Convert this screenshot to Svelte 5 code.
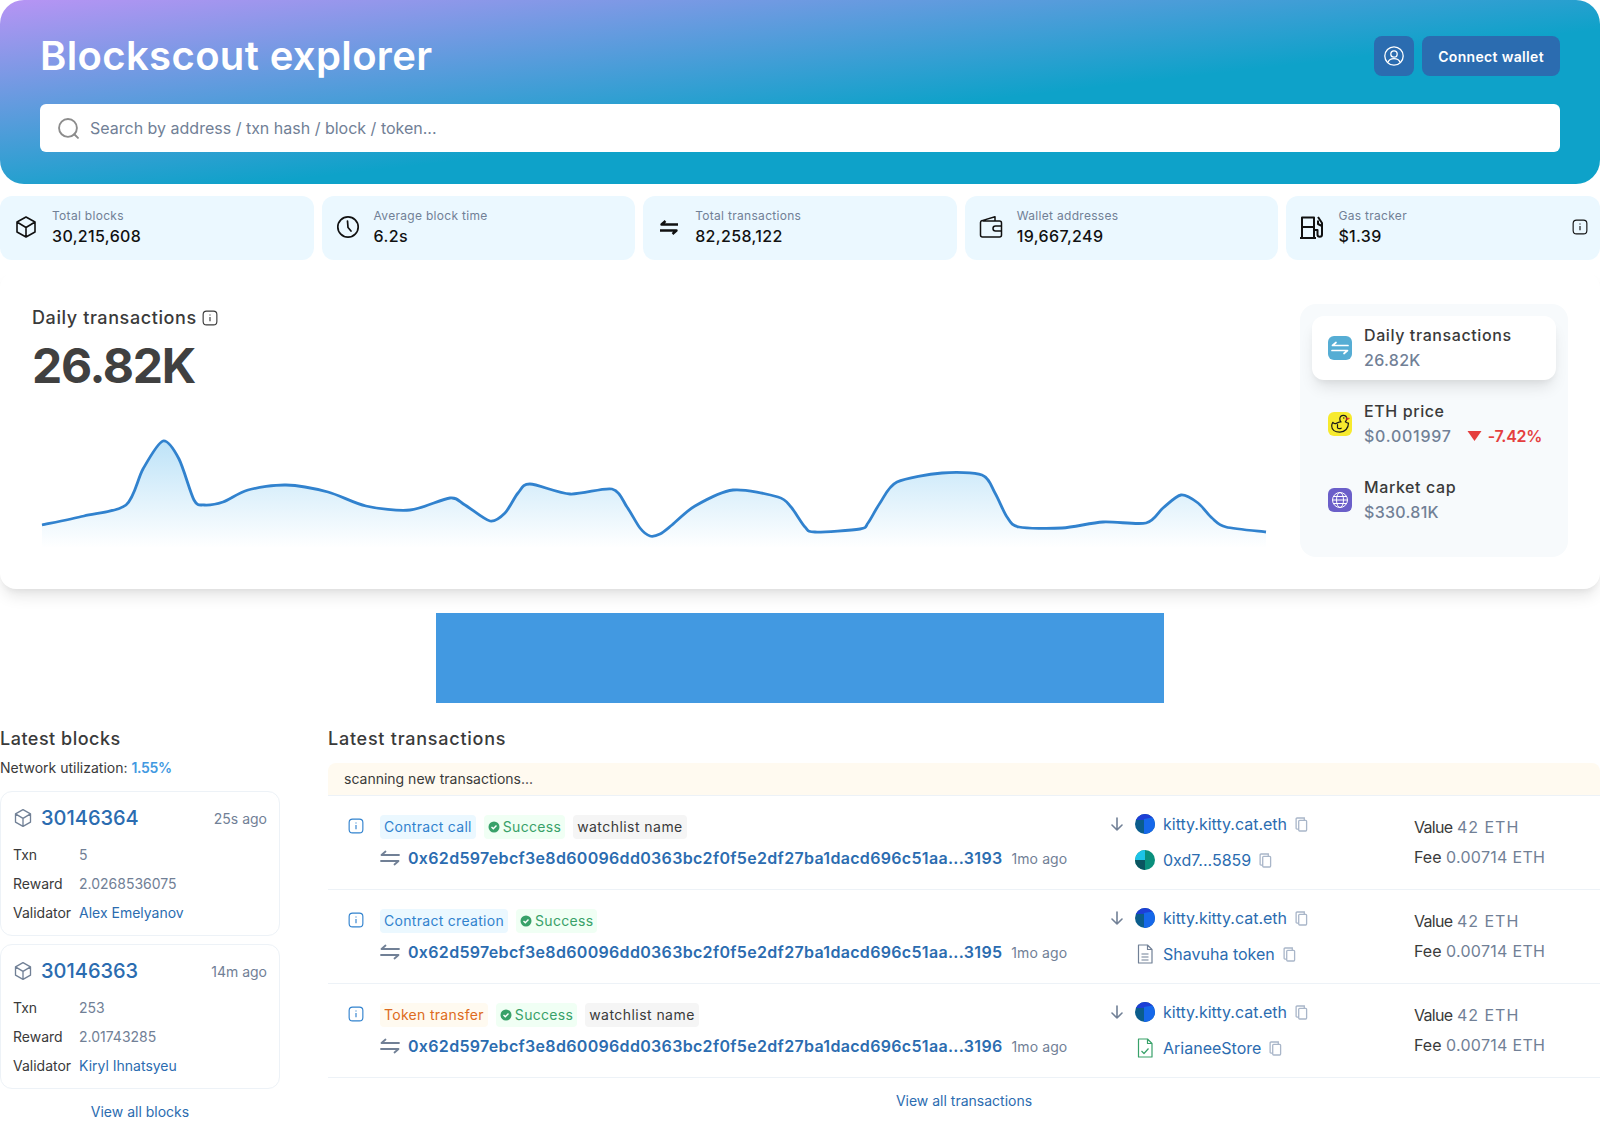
<script lang="ts">
	const stats = [
		{ icon: 'cube', label: 'Total blocks', value: '30,215,608' },
		{ icon: 'clock', label: 'Average block time', value: '6.2s' },
		{ icon: 'swap', label: 'Total transactions', value: '82,258,122' },
		{ icon: 'wallet', label: 'Wallet addresses', value: '19,667,249' },
		{ icon: 'gas', label: 'Gas tracker', value: '$1.39', info: true }
	];

	const points = [
		[42, 525], [84, 516], [126, 505], [143, 469], [163, 441], [179, 459], [194, 500], [204, 505],
		[223, 502], [248, 490], [286, 485], [328, 492], [366, 506], [410, 510], [450, 498], [465, 505], [490, 521],
		[505, 513], [518, 493], [530, 484], [570, 494], [612, 489], [627, 507], [640, 528], [650, 536], [660, 534],
		[672, 525], [695, 506], [733, 490], [778, 497], [791, 507], [805, 527], [815, 532], [860, 529], [868, 523],
		[880, 503], [897, 482], [942, 473], [982, 475], [995, 493], [1007, 517], [1019, 527], [1062, 528],
		[1103, 522], [1146, 523], [1163, 508], [1181, 495], [1198, 503], [1212, 518], [1226, 527], [1266, 532]
	];

	function smooth(pts: number[][]) {
		let d = `M${pts[0][0]} ${pts[0][1]}`;
		for (let i = 0; i < pts.length - 1; i++) {
			const p0 = pts[i - 1] ?? pts[i];
			const p1 = pts[i];
			const p2 = pts[i + 1];
			const p3 = pts[i + 2] ?? p2;
			const c1x = p1[0] + (p2[0] - p0[0]) / 7;
			const c1y = p1[1] + (p2[1] - p0[1]) / 7;
			const c2x = p2[0] - (p3[0] - p1[0]) / 7;
			const c2y = p2[1] - (p3[1] - p1[1]) / 7;
			d += ` C${c1x} ${c1y} ${c2x} ${c2y} ${p2[0]} ${p2[1]}`;
		}
		return d;
	}
	const line = smooth(points);
	const area = `${line} L1266 548 L42 548 Z`;

	const blocks = [
		{ num: '30146364', time: '25s ago', txn: '5', reward: '2.0268536075', validator: 'Alex Emelyanov' },
		{ num: '30146363', time: '14m ago', txn: '253', reward: '2.01743285', validator: 'Kiryl Ihnatsyeu' }
	];

	const txs = [
		{ kind: 'Contract call', cls: 'tag-blue', watch: true, end: '3193', to: '0xd7...5859', toIcon: 'pie' },
		{ kind: 'Contract creation', cls: 'tag-blue', watch: false, end: '3195', to: 'Shavuha token', toIcon: 'doc' },
		{ kind: 'Token transfer', cls: 'tag-orange', watch: true, end: '3196', to: 'ArianeeStore', toIcon: 'check' }
	];
</script>

{#snippet info(cls)}
	<svg class={cls} viewBox="0 0 14 14" fill="none" stroke="currentColor"><rect x="1" y="1" width="12" height="12" rx="3"/><path d="M7 6.2v3.6M7 4v.9"/></svg>
{/snippet}

{#snippet swap(cls)}
	<svg class={cls} viewBox="0 0 20 16" fill="none" stroke="currentColor" stroke-width="1.8" stroke-linecap="round" stroke-linejoin="round"><path d="M19 5H1.5L5.5 1.500M1 11h17.500l-4 3.500"/></svg>
{/snippet}

{#snippet cube(cls)}
	<svg class={cls} viewBox="0 0 24 24" fill="none" stroke="currentColor" stroke-width="1.6" stroke-linejoin="round"><path d="M12 2l9 5v10l-9 5-9-5V7zM3 7l9 5.500L21 7M12 12.500V22"/></svg>
{/snippet}

{#snippet copy()}
	<svg class="copy" viewBox="0 0 14 16" fill="none" stroke="#a9b6c9" stroke-width="1.4"><rect x="4" y="3.500" width="8.500" height="11.500" rx="1"/><path d="M4 13H2.200a1 1 0 0 1-1-1V2a1 1 0 0 1 1-1H10v2.500"/></svg>
{/snippet}

{#snippet kitty()}
	<svg class="avatar" viewBox="0 0 20 20"><clipPath id="av"><circle cx="10" cy="10" r="10"/></clipPath><g clip-path="url(#av)"><rect width="20" height="20" fill="#0b5d8c"/><rect width="20" height="6" fill="#1d3fd6"/><path d="M9 5l11-2v17H9z" fill="#1668ea"/></g></svg>
{/snippet}

{#snippet pie()}
	<svg class="avatar" viewBox="0 0 20 20"><clipPath id="pv"><circle cx="10" cy="10" r="10"/></clipPath><g clip-path="url(#pv)"><rect width="20" height="20" fill="#0a8f7c"/><rect width="10" height="10" fill="#1cc3e8"/><rect y="10" width="10" height="10" fill="#0b5560"/></g></svg>
{/snippet}

<div class="page">
	<header class="hero">
		<div class="hero-top">
			<h1>Blockscout explorer</h1>
			<div class="actions">
				<button class="btn btn-icon" aria-label="Profile">
					<svg viewBox="0 0 20 20" fill="none" stroke="#fff" stroke-width="1.300"><circle cx="10" cy="10" r="9.200"/><circle cx="10" cy="8" r="3.200"/><path d="M4 16.200c1-2.600 3.200-3.600 6-3.600s5 1 6 3.600"/></svg>
				</button>
				<button class="btn">Connect wallet</button>
			</div>
		</div>
		<div class="search">
			<svg viewBox="0 0 20 20" fill="none" stroke="#8c8c8c" stroke-width="1.800" stroke-linecap="round"><circle cx="9.500" cy="9.500" r="8.500"/><path d="M15.500 15.500L19 19"/></svg>
			<span>Search by address / txn hash / block / token...</span>
		</div>
	</header>

	<section class="stats">
		{#each stats as s}
			<div class="stat">
				{#if s.icon === 'cube'}
					{@render cube('stat-icon')}
				{:else if s.icon === 'clock'}
					<svg class="stat-icon" viewBox="0 0 24 24" fill="none" stroke="currentColor" stroke-width="1.700" stroke-linecap="round"><circle cx="12" cy="12" r="10.200"/><path d="M11.500 6l.5 6.500 3 3.500"/></svg>
				{:else if s.icon === 'swap'}
					<svg class="stat-icon" viewBox="0 0 24 24" fill="none" stroke="currentColor" stroke-width="2.400" stroke-linejoin="round"><path d="M21 9.500H4.500L8.500 6M3 15.500h16.500l-4 3.500"/></svg>
				{:else if s.icon === 'wallet'}
					<svg class="stat-icon" viewBox="0 0 24 24" fill="none" stroke="currentColor" stroke-width="1.500" stroke-linejoin="round"><path d="M1.500 7.500A2 2 0 0 1 3 5.600L16 1.800v4M3.500 6h17a2 2 0 0 1 2 2v12a2 2 0 0 1-2 2h-17a2 2 0 0 1-2-2V7.500"/><path d="M22.500 11h-6a2.500 2.500 0 0 0 0 5h6"/></svg>
				{:else}
					<svg class="stat-icon" viewBox="0 0 24 24" fill="none" stroke="currentColor" stroke-width="2" stroke-linejoin="round"><path d="M2 23V2.500h12V23M2 12h12M0 23h16M14 15h3.500v4.500a2 2 0 0 0 4.500 0V8l-4-6"/><path d="M18 5.500v3.500l4 2"/></svg>
				{/if}
				<div class="stat-text">
					<div class="stat-label">{s.label}</div>
					<div class="stat-value">{s.value}</div>
				</div>
				{#if s.info}
					{@render info('stat-info')}
				{/if}
			</div>
		{/each}
	</section>

	<section class="chart-card">
		<div class="chart-main">
			<div class="chart-title">Daily transactions {@render info('title-info')}</div>
			<div class="chart-value">26.82K</div>
			<svg class="chart" viewBox="32 390 1248 167">
				<defs>
					<linearGradient id="fill" gradientUnits="userSpaceOnUse" x1="0" y1="442" x2="0" y2="548">
						<stop offset="0" stop-color="#bee3f8"/>
						<stop offset="1" stop-color="#fff"/>
					</linearGradient>
				</defs>
				<path d={area} fill="url(#fill)"/>
				<path d={line} fill="none" stroke="#3182ce" stroke-width="2.800"/>
			</svg>
		</div>
		<aside class="chart-panel">
			<div class="metric metric-active">
				<div class="metric-icon icon-blue">
					<svg viewBox="0 0 24 24" fill="none" stroke="#fff" stroke-width="1.700" stroke-linecap="round" stroke-linejoin="round"><path d="M20 9.500H4.500L8 6.500M4 14.500h15.500l-3.500 3"/></svg>
				</div>
				<div>
					<div class="metric-label">Daily transactions</div>
					<div class="metric-value">26.82K</div>
				</div>
			</div>
			<div class="metric">
				<div class="metric-icon icon-yellow">
					<svg viewBox="0 0 24 24" fill="none" stroke="#1a1a1a" stroke-width="1.200" stroke-linejoin="round" stroke-linecap="round"><path d="M13 10c-.9-1-1.300-2.200-1.200-3.300.2-2 1.800-3.300 3.500-3.300 2 0 3.400 1.400 3.400 3.300 0 1.300-.7 2.300-1.400 3.100 1.500 1.100 2.600 1.500 3.200 1.300 0 5-3.500 9-8.600 9-4.800 0-8.200-2.300-8.200-6.200 0-1.100.3-2.400 1.100-3.600.8 1.400 2.200 1.600 3.500 1.100 1.500-.6 2.800-1.700 4.700-1.400z"/><path d="M9.500 12.500v3.300c1 1.100 2.500 1 3.700.4"/><path d="M18.600 5.800l2.900.6-2.800 1.500z" fill="#d4342a" stroke="#d4342a" stroke-width=".6"/><circle cx="15.800" cy="6" r=".7" fill="#1a1a1a" stroke="none"/></svg>
				</div>
				<div>
					<div class="metric-label">ETH price</div>
					<div class="metric-value">
						<span class="price">$0.001997</span>
						<span class="delta"><svg viewBox="0 0 14 10"><path d="M0 0h14L7 10z" fill="#e53e3e"/></svg>-7.42%</span>
					</div>
				</div>
			</div>
			<div class="metric">
				<div class="metric-icon icon-purple">
					<svg viewBox="0 0 24 24" fill="none" stroke="#fff" stroke-width="1"><circle cx="12" cy="12" r="7.500"/><ellipse cx="12" cy="12" rx="3.500" ry="7.500"/><path d="M4.500 12h15M5.500 8.500h13M5.500 15.500h13"/></svg>
				</div>
				<div>
					<div class="metric-label">Market cap</div>
					<div class="metric-value">$330.81K</div>
				</div>
			</div>
		</aside>
	</section>

	<div class="ad"></div>

	<section class="latest">
		<div class="blocks">
			<h2>Latest blocks</h2>
			<div class="utilization">Network utilization: <b>1.55%</b></div>
			<div class="block-list">
				{#each blocks as b}
					<div class="block">
						<div class="block-head">
							{@render cube('block-icon')}
							<a href="#top" class="block-num">{b.num}</a>
							<span class="block-time">{b.time}</span>
						</div>
						<div class="block-grid">
							<span>Txn</span><span class="muted">{b.txn}</span>
							<span>Reward</span><span class="muted">{b.reward}</span>
							<span>Validator</span><a href="#top">{b.validator}</a>
						</div>
					</div>
				{/each}
			</div>
			<a href="#top" class="view-all view-blocks">View all blocks</a>
		</div>

		<div class="txs">
			<h2 class="txs-title">Latest transactions</h2>
			<div class="scanning">scanning new transactions...</div>
			{#each txs as t}
				<div class="tx">
					<div class="tx-info">{@render info('tx-info-icon')}</div>
					<div class="tx-main">
						<div class="tags">
							<span class="tag {t.cls}">{t.kind}</span>
							<span class="tag tag-green">
								<svg viewBox="0 0 12 12"><circle cx="6" cy="6" r="5.500" fill="#38a169"/><path d="M3.500 6l1.800 1.800L8.500 4.500" fill="none" stroke="#fff" stroke-width="1.400"/></svg>
								Success
							</span>
							{#if t.watch}
								<span class="tag tag-gray">watchlist name</span>
							{/if}
						</div>
						<div class="hash-row">
							{@render swap('tx-swap')}
							<a href="#top" class="hash">0x62d597ebcf3e8d60096dd0363bc2f0f5e2df27ba1dacd696c51aa...{t.end}</a>
							<span class="tx-time">1mo ago</span>
						</div>
					</div>
					<div class="tx-addr">
						<div class="addr-row first">
							<svg class="arrow" viewBox="0 0 12 14" fill="none" stroke="#718096" stroke-width="1.600" stroke-linecap="round" stroke-linejoin="round"><path d="M6 1v12M1 8l5 5 5-5"/></svg>
							{@render kitty()}
							<a href="#top">kitty.kitty.cat.eth</a>
							{@render copy()}
						</div>
						<div class="addr-row second">
							{#if t.toIcon === 'pie'}
								{@render pie()}
							{:else}
								<svg class="avatar" viewBox="0 0 20 20" fill="none" stroke={t.toIcon === 'doc' ? '#718096' : '#38a169'} stroke-width="1.200" stroke-linejoin="round"><path d="M3.500 1h9l4.500 4.500V19H3.500zM12.500 1v4.500H17"/>{#if t.toIcon === 'doc'}<path d="M6.500 10h7M6.500 13h7M6.500 16h7"/>{:else}<path d="M6.500 13l2.500 2.500 4.500-5"/>{/if}</svg>
							{/if}
							<a href="#top">{t.to}</a>
							{@render copy()}
						</div>
					</div>
					<div class="tx-value">
						<div class="row-value"><span class="lbl">Value</span> <span class="muted">42 ETH</span></div>
						<div class="row-fee"><span>Fee</span> <span class="muted">0.00714 ETH</span></div>
					</div>
				</div>
			{/each}
			<a href="#top" class="view-all view-txs">View all transactions</a>
		</div>
	</section>
</div>

<style>
	:global(body) {
		margin: 0;
		background: #fff;
	}
	.page {
		font-family: Inter, "Liberation Sans", sans-serif;
		font-size: 14px;
		color: #3a3a3a;
		height: 1122px;
		overflow: hidden;
	}
	a {
		color: #2b6cb0;
		text-decoration: none;
	}
	svg {
		display: block;
		flex-shrink: 0;
	}
	.muted {
		color: #718096;
	}

	.hero {
		height: 184px;
		box-sizing: border-box;
		padding: 36px 40px 32px;
		border-radius: 24px;
		background: linear-gradient(to bottom right, #b794f4 0%, #0ea2c9 58%);
	}
	.hero-top {
		display: flex;
		justify-content: space-between;
		align-items: center;
		height: 40px;
		margin-bottom: 28px;
	}
	h1 {
		margin: 0;
		font-size: 40px;
		font-weight: 600;
		color: #fff;
		line-height: 40px;
		letter-spacing: 0.37px;
	}
	.actions {
		display: flex;
		gap: 8px;
	}
	.btn {
		height: 40px;
		padding: 0 16px;
		border: 0;
		border-radius: 8px;
		background: #2b6cb0;
		color: #fff;
		font: 600 14px Inter, sans-serif;
		letter-spacing: 0.33px;
	}
	.btn-icon {
		width: 40px;
		padding: 10px;
	}
	.search {
		height: 48px;
		display: flex;
		align-items: center;
		gap: 11px;
		padding-left: 18px;
		background: #fff;
		border-radius: 6px;
		font-size: 16px;
		color: #718096;
	}
	.search svg {
		width: 21px;
		height: 21px;
	}

	.stats {
		display: grid;
		grid-template-columns: repeat(5, 1fr);
		gap: 8px;
		margin-top: 12px;
	}
	.stat {
		height: 64px;
		display: flex;
		align-items: center;
		gap: 14px;
		padding: 0 12px 0 14px;
		background: #ebf8ff;
		border-radius: 12px;
		color: #111;
	}
	.stat-icon {
		width: 24px;
		height: 24px;
		margin-top: -2px;
	}
	.stat-text {
		flex: 1;
	}
	.stat-label {
		font-size: 12px;
		line-height: 16px;
		color: #718096;
		letter-spacing: 0.3px;
	}
	.stat-value {
		font-size: 16px;
		font-weight: 500;
		line-height: 24px;
		letter-spacing: 0.35px;
	}
	.stat-info {
		width: 16px;
		height: 16px;
		margin: -2px 0 0 0;
	}

	.chart-card {
		display: flex;
		gap: 20px;
		margin-top: 12px;
		padding: 32px;
		border-radius: 16px;
		background: #fff;
		box-shadow: 0 10px 15px -3px rgba(0, 0, 0, 0.1), 0 4px 6px -2px rgba(0, 0, 0, 0.05);
	}
	.chart-main {
		flex: 1;
		min-width: 0;
	}
	.chart-title {
		display: flex;
		align-items: center;
		gap: 5px;
		margin-top: 2px;
		font-size: 18px;
		font-weight: 500;
		line-height: 24px;
		letter-spacing: 0.6px;
	}
	.title-info {
		width: 16px;
		height: 16px;
	}
	.chart-value {
		margin-top: 12px;
		font-size: 48px;
		font-weight: 700;
		line-height: 48px;
		letter-spacing: -1.3px;
		color: #404040;
	}
	.chart {
		width: 1248px;
		height: 167px;
	}
	.chart-panel {
		width: 268px;
		box-sizing: border-box;
		padding: 12px;
		display: flex;
		flex-direction: column;
		gap: 12px;
		background: #f7fafc;
		border-radius: 16px;
	}
	.metric {
		height: 64px;
		display: flex;
		align-items: center;
		gap: 12px;
		padding-left: 16px;
		border-radius: 12px;
	}
	.metric-active {
		background: #fff;
		box-shadow: 0 10px 15px -3px rgba(0, 0, 0, 0.1), 0 4px 6px -2px rgba(0, 0, 0, 0.05);
	}
	.metric-icon {
		width: 24px;
		height: 24px;
		border-radius: 6px;
	}
	.icon-blue {
		background: #56add4;
	}
	.icon-yellow {
		background: #f7ea2e;
	}
	.icon-purple {
		background: #6b5fc9;
	}
	.metric-label {
		margin: -1px 0 1px;
		font-size: 16px;
		font-weight: 500;
		line-height: 24px;
		letter-spacing: 0.6px;
	}
	.metric-value {
		display: flex;
		align-items: center;
		gap: 15px;
		font-size: 16px;
		font-weight: 500;
		line-height: 24px;
		color: #718096;
		letter-spacing: 0.3px;
	}
	.price {
		letter-spacing: 0.75px;
	}
	.delta {
		display: flex;
		align-items: center;
		gap: 6px;
		color: #e53e3e;
		font-weight: 600;
		letter-spacing: -0.3px;
	}
	.delta svg {
		width: 15px;
		height: 10px;
	}

	.ad {
		width: 728px;
		height: 90px;
		margin: 24px auto 0;
		background: #4299e1;
	}

	.latest {
		display: flex;
		gap: 48px;
		margin-top: 24px;
	}
	h2 {
		margin: 0;
		font-size: 18px;
		font-weight: 500;
		line-height: 24px;
		letter-spacing: 0.5px;
	}
	.txs-title {
		letter-spacing: 0.75px;
	}
	.blocks {
		width: 280px;
		flex-shrink: 0;
	}
	.utilization {
		margin-top: 7px;
		line-height: 20px;
	}
	.utilization b {
		color: #4299e1;
		font-weight: 600;
		letter-spacing: -0.3px;
	}
	.block-list {
		display: flex;
		flex-direction: column;
		gap: 8px;
		margin-top: 13px;
	}
	.block {
		height: 145px;
		box-sizing: border-box;
		padding: 12px;
		border: 1px solid #edf2f7;
		border-radius: 12px;
	}
	.block-head {
		display: flex;
		align-items: center;
		gap: 8px;
		height: 28px;
		margin-bottom: 13px;
	}
	.block-icon {
		width: 20px;
		height: 20px;
		color: #718096;
	}
	.block-num {
		flex: 1;
		font-size: 20px;
		font-weight: 500;
	}
	.block-time {
		color: #718096;
	}
	.block-grid {
		display: grid;
		grid-template-columns: 66px 1fr;
		row-gap: 9px;
		line-height: 20px;
	}
	.view-all {
		display: block;
		text-align: center;
		line-height: 20px;
	}
	.view-blocks {
		margin-top: 13px;
	}
	.view-txs {
		margin-top: 13px;
	}

	.txs {
		flex: 1;
		min-width: 0;
	}
	.scanning {
		margin-top: 12px;
		box-sizing: border-box;
		padding-left: 16px;
		line-height: 32px;
		background: #fffaf0;
		border-radius: 8px 8px 0 0;
		border-bottom: 1px solid #edf2f7;
		height: 33px;
	}
	.tx {
		display: grid;
		grid-template-columns: 52px 731px 303px 1fr;
		height: 94px;
		box-sizing: border-box;
		padding-top: 19px;
		border-bottom: 1px solid #edf2f7;
	}
	.tx-info {
		padding: 3px 0 0 20px;
		color: #3182ce;
	}
	.tx-info-icon {
		width: 16px;
		height: 16px;
	}
	.tags {
		display: flex;
		gap: 8px;
	}
	.tag {
		display: flex;
		align-items: center;
		gap: 3px;
		height: 24px;
		padding: 0 4px;
		border-radius: 4px;
		line-height: 24px;
		letter-spacing: 0.3px;
	}
	.tag svg {
		width: 12px;
		height: 12px;
	}
	.tag-blue {
		background: #ebf8ff;
		color: #3182ce;
	}
	.tag-orange {
		background: #fffaf0;
		color: #dd6b20;
	}
	.tag-green {
		background: #f0fff4;
		color: #38a169;
	}
	.tag-gray {
		background: #f5f5f5;
		color: #3a3a3a;
		letter-spacing: 0.45px;
	}
	.hash-row {
		display: flex;
		align-items: center;
		margin-top: 7px;
		height: 24px;
	}
	.tx-swap {
		width: 20px;
		height: 16px;
		color: #718096;
		margin-right: 8px;
	}
	.hash {
		font-size: 16px;
		font-weight: 600;
		line-height: 24px;
		letter-spacing: 0.32px;
	}
	.tx-time {
		margin-left: 9px;
		color: #718096;
		letter-spacing: 0.1px;
	}
	.tx-addr {
		margin-top: -3px;
	}
	.addr-row {
		display: flex;
		align-items: center;
		height: 24px;
		font-size: 16px;
	}
	.addr-row.second {
		margin-top: 12px;
		padding-left: 24px;
	}
	.arrow {
		width: 12px;
		height: 14px;
		margin-right: 12px;
	}
	.avatar {
		width: 20px;
		height: 20px;
		margin-right: 8px;
	}
	.copy {
		width: 13px;
		height: 15px;
		margin-left: 8px;
	}
	.tx-value {
		display: flex;
		flex-direction: column;
		gap: 6px;
		font-size: 16px;
		line-height: 24px;
	}
	.lbl {
		letter-spacing: -0.7px;
	}
	.row-value .muted {
		letter-spacing: 1px;
	}
	.row-fee .muted {
		letter-spacing: 0.3px;
	}
</style>
